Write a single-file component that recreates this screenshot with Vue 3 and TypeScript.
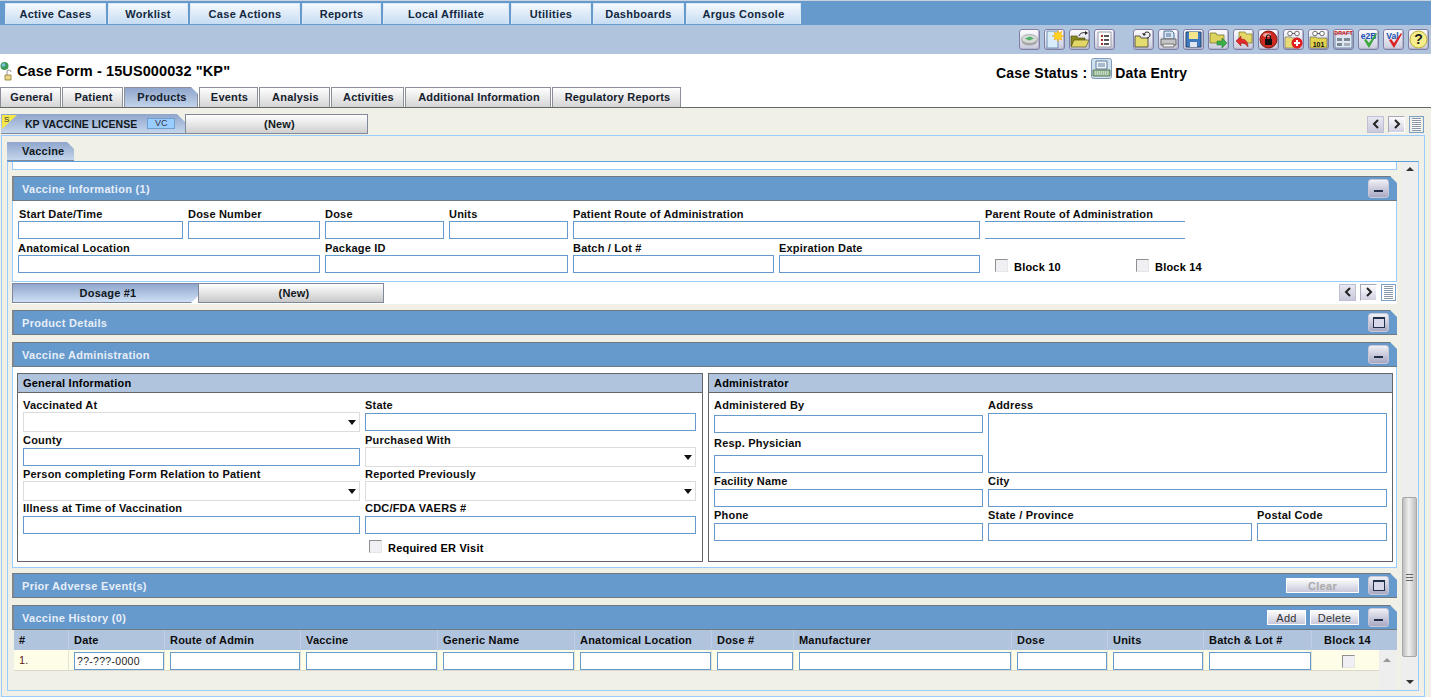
<script setup lang="ts">
interface Field { label: string; width: number; open?: boolean }

const menus = [
  { label: 'Active Cases', width: 101 },
  { label: 'Worklist', width: 80 },
  { label: 'Case Actions', width: 110 },
  { label: 'Reports', width: 79 },
  { label: 'Local Affiliate', width: 126 },
  { label: 'Utilities', width: 80 },
  { label: 'Dashboards', width: 91 },
  { label: 'Argus Console', width: 115 },
]
const tabs = [
  { label: 'General', width: 61 },
  { label: 'Patient', width: 61 },
  { label: 'Products', width: 74, active: true },
  { label: 'Events', width: 59 },
  { label: 'Analysis', width: 71 },
  { label: 'Activities', width: 73 },
  { label: 'Additional Information', width: 146 },
  { label: 'Regulatory Reports', width: 129 },
]
const infoRow1: Field[] = [
  { label: 'Start Date/Time', width: 165 },
  { label: 'Dose Number', width: 132 },
  { label: 'Dose', width: 119 },
  { label: 'Units', width: 119 },
  { label: 'Patient Route of Administration', width: 407 },
  { label: 'Parent Route of Administration', width: 200, open: true },
]
const infoRow2: Field[] = [
  { label: 'Anatomical Location', width: 302 },
  { label: 'Package ID', width: 243 },
  { label: 'Batch / Lot #', width: 201 },
  { label: 'Expiration Date', width: 201 },
]
const historyCols = ['#', 'Date', 'Route of Admin', 'Vaccine', 'Generic Name', 'Anatomical Location', 'Dose #', 'Manufacturer', 'Dose', 'Units', 'Batch & Lot #']
</script>

<template>
  <div class="page">
    <nav class="menubar">
      <button v-for="m in menus" :key="m.label" class="menu" :style="{ width: m.width + 'px' }">{{ m.label }}</button>
    </nav>

    <div class="toolbar">
      <div class="tools">
        <span class="tool"><svg viewBox="0 0 19 19"><ellipse cx="9.5" cy="11" rx="8" ry="4.5" fill="#a9a9a9"/><ellipse cx="9.5" cy="9" rx="8" ry="4.5" fill="#d5dad5" stroke="#8a8a8a" stroke-width=".6"/><path d="M5 8.5l5-2 4 2-5 2z" fill="#4fb06a"/></svg></span>
        <span class="tool"><svg viewBox="0 0 19 19"><path d="M2 1h11v17H2z" fill="#d8ecfa" stroke="#6f8fb8"/><path d="M13 0l1 3 3-2-1 4 3 1-3 1 1 3-3-1-1 3-1-3-3 1 1-3-3-1 3-1-1-3 3 1z" fill="#ffd21f" stroke="#e89a10" stroke-width=".4"/></svg></span>
        <span class="tool"><svg viewBox="0 0 19 19"><path d="M1 6h6l1 2h7v8H1z" fill="#8b8a1c" stroke="#3d3d10" stroke-width=".6"/><path d="M4 10h15l-3 7H1z" fill="#e3d768" stroke="#3d3d10" stroke-width=".6"/><path d="M9 6c1-3 4-4 7-3" fill="none" stroke="#222" stroke-width="1"/><path d="M15 1l3 2-3 2z" fill="#222"/></svg></span>
        <span class="tool"><svg viewBox="0 0 19 19"><path d="M3 2h13v15H3z" fill="#fff" stroke="#9a9aa8"/><path d="M6 5h2v2H6zM6 9h2v2H6zM6 13h2v2H6z" fill="#a03020"/><path d="M9 5h5v2H9zM9 9h5v2H9zM9 13h5v2H9z" fill="#555"/></svg></span>
        <span class="tool gap"><svg viewBox="0 0 19 19"><path d="M1 6h5l1 2h7v9H1z" fill="#e4dc70" stroke="#333" stroke-width=".8"/><path d="M10 5c0-4 6-4 6 0 0 2-2 3-3 3" fill="none" stroke="#222" stroke-width="1"/><path d="M8 3l2 3 2-2z" fill="#222"/></svg></span>
        <span class="tool"><svg viewBox="0 0 19 19"><path d="M5 1h8l2 2v6H5z" fill="#d8e6f4" stroke="#4c6f99"/><path d="M2 9h15v6H2z" fill="#c4c4c4" stroke="#666"/><path d="M4 14h11v3H4z" fill="#efefef" stroke="#777"/><path d="M7 4h5M7 6h5" stroke="#4c6f99"/></svg></span>
        <span class="tool"><svg viewBox="0 0 19 19"><path d="M2 2h15v15H2z" fill="#3f79c0" stroke="#23446e"/><path d="M5 2h9v7H5z" fill="#f2e58c"/><path d="M6 12h7v5H6z" fill="#dfe6ee"/></svg></span>
        <span class="tool"><svg viewBox="0 0 19 19"><path d="M1 3h6l1 2h7v8H1z" fill="#dcd25e" stroke="#6a6a20" stroke-width=".7"/><path d="M8 11h5V8l5 5-5 5v-3H8z" fill="#3cae49" stroke="#1f6a2a" stroke-width=".5"/></svg></span>
        <span class="tool"><svg viewBox="0 0 19 19"><path d="M5 2h6l1 2h6v9H5z" fill="#e5d66a" stroke="#7a7a20" stroke-width=".7"/><path d="M2 11l5-5v3c5 0 7 3 7 8-2-3-4-4-7-4v3z" fill="#e32b2b" stroke="#8c1414" stroke-width=".5"/></svg></span>
        <span class="tool"><svg viewBox="0 0 19 19"><circle cx="9.5" cy="9.5" r="8.5" fill="#cf2a22" stroke="#7b1410"/><ellipse cx="8" cy="5" rx="4" ry="2" fill="#f0a09a"/><path d="M6 9h7v6H6z" fill="#111"/><path d="M7.5 9V7a2 2 0 0 1 4 0v2" fill="none" stroke="#111" stroke-width="1.2"/></svg></span>
        <span class="tool"><svg viewBox="0 0 19 19"><path d="M1 7h6l1 1h7v10H1z" fill="#e7dc78" stroke="#666" stroke-width=".6"/><circle cx="6" cy="3.5" r="2.3" fill="#fff" stroke="#333" stroke-width=".7"/><circle cx="13" cy="3.5" r="2.3" fill="#fff" stroke="#333" stroke-width=".7"/><path d="M8 3.5h3" stroke="#333" stroke-width=".7"/><circle cx="13" cy="13" r="5.5" fill="#e11d1d"/><path d="M10 12h2v-2h2v2h2v2h-2v2h-2v-2h-2z" fill="#fff"/></svg></span>
        <span class="tool"><svg viewBox="0 0 19 19"><path d="M1 7h6l1 1h10v10H1z" fill="#e1d34e" stroke="#555" stroke-width=".6"/><circle cx="6" cy="3.5" r="2.3" fill="#fff" stroke="#333" stroke-width=".7"/><circle cx="13" cy="3.5" r="2.3" fill="#fff" stroke="#333" stroke-width=".7"/><path d="M8 3.5h3" stroke="#333" stroke-width=".7"/><text x="9.5" y="16.5" class="ico-text ico-101">101</text></svg></span>
        <span class="tool"><svg viewBox="0 0 19 19"><path d="M1 3h17v15H1z" fill="#dfe8f2" stroke="#6d88a8"/><path d="M3 8h5v3H3zM3 13h5v3H3z" fill="#7d8a96"/><path d="M10 8h6v3h-6z" fill="#7d8a96"/><path d="M10 13h6v3h-6z" fill="#a7b1bb"/><text x="9.5" y="4.5" class="ico-text ico-draft">DRAFT</text></svg></span>
        <span class="tool"><svg viewBox="0 0 19 19"><text x="9.5" y="8.5" class="ico-text ico-e2b">e2B</text><path d="M5 10l2-1 3 4 7-10 1 1-8 14z" fill="#3ca63c"/></svg></span>
        <span class="tool"><svg viewBox="0 0 19 19"><text x="8.5" y="9" class="ico-text ico-val">Val</text><path d="M5 10l2-1 3 4 7-10 1 1-8 14z" fill="#dd2020"/></svg></span>
        <span class="tool"><svg viewBox="0 0 19 19"><circle cx="9.5" cy="9.5" r="8.5" fill="#f6ee8a" stroke="#b8ac3a"/><text x="9.5" y="14" class="ico-text ico-q">?</text></svg></span>
      </div>
    </div>

    <header class="titlebar">
      <div class="title">
        <svg class="title-ico" viewBox="0 0 16 20"><circle cx="4.5" cy="5" r="4" fill="#3f9a58"/><circle cx="3.5" cy="4" r="1.8" fill="#7cc2e8"/><path d="M5 14h6v5H5z" fill="#e8d98a" stroke="#8a7a30" stroke-width=".8"/><path d="M7 14v-3a2 2 0 0 1 4 0" fill="none" stroke="#777" stroke-width=".8"/></svg>
        <h1>Case Form - 15US000032 "KP"</h1>
      </div>
      <div class="status">
        <span>Case Status :</span>
        <svg class="status-ico" viewBox="0 0 21 21"><rect x=".5" y=".5" width="20" height="20" rx="2" fill="#cfe0ef" stroke="#8099b4"/><path d="M5 3h11v8H5z" fill="#eef4fa" stroke="#5d7d9e"/><path d="M7 6h7M7 8h7" stroke="#5d7d9e"/><path d="M2 12h17v6H2z" fill="#9fc09f" stroke="#5a7a5a"/><path d="M4 14h13M4 16h13" stroke="#e6efe6" stroke-dasharray="1 1"/></svg>
        <span>Data Entry</span>
      </div>
    </header>

    <div class="tabs">
      <div v-for="t in tabs" :key="t.label" class="tab" :class="{ active: t.active }" :style="{ width: t.width + 'px' }">{{ t.label }}</div>
    </div>

    <main class="body">
      <div class="subtabs">
        <div class="product-tab">
          <span class="suspect">S</span>
          <span>KP VACCINE LICENSE</span>
          <span class="vc">VC</span>
        </div>
        <div class="new-tab product-new">(New)</div>
        <div class="nav nav-top">
          <span class="nav-btn prev"><svg viewBox="0 0 10 10"><path d="M7 1L3 5l4 4" /></svg></span>
          <span class="nav-btn next"><svg viewBox="0 0 10 10"><path d="M3 1l4 4-4 4" /></svg></span>
          <span class="nav-list"></span>
        </div>
      </div>

      <div class="frame-outer">
        <div class="vaccine-tab">Vaccine</div>
        <div class="frame-inner">
          <div class="content">
            <div class="stub"></div>

            <section class="sect-head first">
              <span>Vaccine Information (1)</span>
              <span class="collapse"><i class="dash"></i></span>
            </section>
            <div class="info-body">
              <div class="row row-one">
                <label v-for="f in infoRow1" :key="f.label" class="field" :style="{ width: f.width + 'px' }">
                  <span class="lbl">{{ f.label }}</span>
                  <input class="inp" :class="{ open: f.open }" type="text" />
                </label>
              </div>
              <div class="row row-two">
                <label v-for="f in infoRow2" :key="f.label" class="field" :style="{ width: f.width + 'px' }">
                  <span class="lbl">{{ f.label }}</span>
                  <input class="inp" type="text" />
                </label>
                <span class="check check-10"><i class="box"></i>Block 10</span>
                <span class="check check-14"><i class="box"></i>Block 14</span>
              </div>
            </div>
            <div class="dosage">
              <div class="dose-tab">Dosage #1</div>
              <div class="new-tab dose-new">(New)</div>
              <div class="nav nav-dose">
                <span class="nav-btn prev"><svg viewBox="0 0 10 10"><path d="M7 1L3 5l4 4" /></svg></span>
                <span class="nav-btn next"><svg viewBox="0 0 10 10"><path d="M3 1l4 4-4 4" /></svg></span>
                <span class="nav-list"></span>
              </div>
            </div>

            <section class="sect-head gap-6">
              <span>Product Details</span>
              <span class="collapse"><i class="square"></i></span>
            </section>

            <section class="sect-head gap-7">
              <span>Vaccine Administration</span>
              <span class="collapse"><i class="dash"></i></span>
            </section>
            <div class="admin-body">
              <div class="panel">
                <div class="panel-head">General Information</div>
                <div class="general">
                  <div class="g-cell"><span class="lbl">Vaccinated At</span><div class="sel"></div></div>
                  <div class="g-cell"><span class="lbl">State</span><input class="inp" type="text" /></div>
                  <div class="g-cell"><span class="lbl">County</span><input class="inp" type="text" /></div>
                  <div class="g-cell"><span class="lbl">Purchased With</span><div class="sel"></div></div>
                  <div class="g-cell"><span class="lbl">Person completing Form Relation to Patient</span><div class="sel"></div></div>
                  <div class="g-cell"><span class="lbl">Reported Previously</span><div class="sel"></div></div>
                  <div class="g-cell"><span class="lbl">Illness at Time of Vaccination</span><input class="inp" type="text" /></div>
                  <div class="g-cell"><span class="lbl">CDC/FDA VAERS #</span><input class="inp" type="text" /></div>
                  <div></div>
                  <div class="er"><i class="box"></i>Required ER Visit</div>
                </div>
              </div>
              <div class="panel">
                <div class="panel-head">Administrator</div>
                <div class="admin">
                  <div class="a-left">
                    <div class="a-cell a-by"><span class="lbl">Administered By</span><input class="inp" type="text" /></div>
                    <div class="a-cell a-resp"><span class="lbl">Resp. Physician</span><input class="inp" type="text" /></div>
                  </div>
                  <div class="a-cell a-addr"><span class="lbl">Address</span><div class="textarea"></div></div>
                  <div class="a-cell"><span class="lbl">Facility Name</span><input class="inp" type="text" /></div>
                  <div class="a-cell a-wide"><span class="lbl">City</span><input class="inp" type="text" /></div>
                  <div class="a-cell"><span class="lbl">Phone</span><input class="inp" type="text" /></div>
                  <div class="a-cell"><span class="lbl">State / Province</span><input class="inp" type="text" /></div>
                  <div class="a-cell"><span class="lbl">Postal Code</span><input class="inp" type="text" /></div>
                </div>
              </div>
            </div>

            <section class="sect-head gap-5">
              <span>Prior Adverse Event(s)</span>
              <span class="actions">
                <button class="act clear">Clear</button>
                <span class="collapse"><i class="square"></i></span>
              </span>
            </section>

            <section class="sect-head gap-7b">
              <span>Vaccine History (0)</span>
              <span class="actions">
                <button class="act add">Add</button>
                <button class="act del">Delete</button>
                <span class="collapse"><i class="dash"></i></span>
              </span>
            </section>
            <div class="history">
              <div class="h-grid h-head">
                <div v-for="c in historyCols" :key="c" class="h-cell">{{ c }}</div>
                <div class="h-cell h-center">Block 14</div>
              </div>
              <div class="h-rowwrap">
                <div class="h-grid h-row">
                  <div class="r-cell r-num">1.</div>
                  <div class="r-cell r-date"><input class="inp" type="text" value="??-???-0000" /></div>
                  <div v-for="n in 9" :key="n" class="r-cell"><input class="inp" type="text" /></div>
                  <div class="r-cell r-check"><i class="box"></i></div>
                </div>
                <div class="mini-scroll"><i class="up"></i></div>
              </div>
            </div>
          </div>
          <div class="scrollbar">
            <i class="up"></i>
            <div class="thumb"><i></i></div>
            <i class="down"></i>
          </div>
        </div>
      </div>
    </main>
  </div>
</template>

<style>
html, body { margin: 0; padding: 0; overflow: hidden; background: #fff; }
</style>

<style scoped>
* { box-sizing: border-box; }
.page {
  width: 1431px; height: 697px; overflow: hidden; display: flex; flex-direction: column;
  font: bold 11px "Liberation Sans", Arial, sans-serif; letter-spacing: .2px; color: #000;
}
button { font: inherit; letter-spacing: inherit; padding: 0; cursor: default; }

.menubar { height: 25px; flex: none; background: #6699cc; border-top: 1px solid #c8d4e0; display: flex; gap: 2px; padding: 2px 0 0 5px; }
.menu { height: 21px; border: 1px solid #dbe8f5; border-width: 1px 1px 0 1px; background: linear-gradient(#f4f9fe, #c6dcf3); color: #12283e; letter-spacing: .3px; }

.toolbar { height: 29px; flex: none; background: #b0c4de; display: flex; justify-content: flex-end; align-items: center; padding-right: 2px; }
.tools { display: flex; gap: 4px; }
.tool { width: 21px; height: 21px; border: 1px solid #7f7fa5; border-radius: 3px; background: linear-gradient(#fbfbff, #c9cbdc); box-shadow: inset -1px -1px 0 #b4b4cc; display: flex; align-items: center; justify-content: center; }
.tool.gap { margin-left: 14px; }
.tool svg { width: 19px; height: 19px; display: block; }
.ico-text { text-anchor: middle; font-family: "Liberation Sans", Arial, sans-serif; font-weight: bold; letter-spacing: 0; }
.ico-101 { font-size: 7px; fill: #111; }
.ico-draft { font-size: 5.5px; fill: #d81414; }
.ico-e2b { font-size: 8.5px; fill: #2050b0; }
.ico-val { font-size: 8.5px; fill: #2050b0; }
.ico-q { font-size: 14px; fill: #222; }

.titlebar { height: 33px; flex: none; background: #fff; display: flex; }
.title { display: flex; align-items: flex-start; width: 231px; flex: none; }
.title-ico { width: 16px; height: 20px; margin-top: 7px; flex: none; }
.title h1 { margin: 8px 0 0 1px; font-size: 14.5px; line-height: 18px; font-weight: bold; letter-spacing: .1px; white-space: nowrap; }
.status { margin-left: 765px; display: flex; align-items: flex-start; font-size: 14px; letter-spacing: .2px; padding-top: 11px; line-height: 17px; white-space: nowrap; }
.status-ico { width: 21px; height: 21px; margin: -7px 3px 0 4px; flex: none; }

.tabs { height: 21px; flex: none; display: flex; gap: 1px; background: #fff; border-bottom: 1px solid #666; }
.tab { height: 20px; border: 1px solid #8a8f98; border-bottom: 0; padding: 0 0 1px 2px; background: linear-gradient(#fefefe, #d5d5d5); display: flex; align-items: center; justify-content: center; color: #14202c; }
.tab.active { background: linear-gradient(#8fa5cc, #c2d4ea); clip-path: polygon(0 0, calc(100% - 7px) 0, 100% 7px, 100% 100%, 0 100%); }

.body { flex: 1; min-height: 0; background: #f0f0e6; display: flex; flex-direction: column; }
.subtabs { height: 21px; margin-top: 6px; flex: none; display: flex; padding-left: 1px; }
.product-tab { width: 184px; height: 20px; background: linear-gradient(#8fa5cc, #c4d6ec); border-bottom: 1px solid #80889a; display: flex; align-items: center; padding-left: 24px; position: relative; font-size: 10.5px; letter-spacing: 0; clip-path: polygon(0 0, calc(100% - 8px) 0, 100% 8px, 100% 100%, 0 100%); color: #101820; }
.suspect { position: absolute; left: 1px; top: 1px; width: 15px; height: 14px; background: #f6e64a; clip-path: polygon(0 0, 100% 0, 0 100%); font-size: 8px; font-weight: normal; line-height: 9px; padding-left: 2px; color: #333; }
.vc { width: 28px; height: 11px; margin-left: 10px; background: #99ccff; border: 1px solid #6f9fd0; font-size: 9px; font-weight: normal; line-height: 9px; text-align: center; color: #334; }
.new-tab { border: 1px solid #80889a; padding-left: 6px; background: linear-gradient(#fefefe, #cfcfcf); display: flex; align-items: center; justify-content: center; color: #101820; }
.product-new { width: 183px; height: 20px; }
.nav { display: flex; align-items: center; margin-left: auto; }
.nav-top { margin-right: 7px; height: 18px; margin-top: 1px; }
.nav-btn { width: 17px; height: 17px; border: 1px solid #fff; display: flex; align-items: center; justify-content: center; background: linear-gradient(#e8e8f2, #c8c8dc); }
.nav-btn.prev { border-color: #c0c0d4; }
.nav-btn.next { margin-left: 4px; border-color: #a8a8b8 #fff #fff #a8a8b8; background: linear-gradient(#fdfdfd, #d0d0e2); }
.nav-btn svg { width: 10px; height: 10px; fill: none; stroke: #222; stroke-width: 2; }
.nav-list { width: 15px; height: 17px; margin-left: 4px; border: 1px solid #7aa0c8; background: repeating-linear-gradient(#fff 0 1px, #8a96a8 1px 2px); background-clip: content-box; padding: 1px 2px; }

.frame-outer { height: 562px; width: 1424px; margin-left: 1px; border: 1px solid #99ccff; padding: 6px 0 0 5px; display: flex; flex-direction: column; flex: none; }
.vaccine-tab { width: 67px; height: 19px; flex: none; background: linear-gradient(#8fa5cc, #c4d6ec); border-bottom: 1px solid #80889a; padding-left: 15px; line-height: 18px; color: #101820; clip-path: polygon(0 0, calc(100% - 7px) 0, 100% 7px, 100% 100%, 0 100%); }
.frame-inner { width: 1412px; height: 530px; flex: none; border: 1px solid #99ccff; border-top-color: #5f9fdc; padding-left: 4px; display: flex; }
.content { width: 1385px; flex: none; display: flex; flex-direction: column; }
.stub { height: 8px; flex: none; background: #fff; border-bottom: 1px solid #99ccff; border-right: 1px solid #99ccff; border-left: 1px solid #99ccff; }

.sect-head { height: 25px; flex: none; background: #6699cc; border-top: 1px solid #707880; border-bottom: 1px solid #707880; border-left: 2px solid #80868c; padding-left: 8px; padding-right: 8px; color: #e6eef8; letter-spacing: .3px; display: flex; align-items: center; justify-content: space-between; clip-path: polygon(0 0, calc(100% - 7px) 0, 100% 7px, 100% 100%, 0 100%); }
.sect-head.first { margin-top: 6px; }
.gap-6 { margin-top: 6px; }
.gap-7 { margin-top: 7px; }
.gap-5 { margin-top: 5px; }
.gap-7b { margin-top: 7px; }
.collapse { width: 21px; height: 19px; border: 1px solid #c8c8d8; border-radius: 3px; background: linear-gradient(#f0f0f6, #a8a8c4); display: flex; align-items: center; justify-content: center; flex: none; }
.dash { width: 9px; height: 2px; margin-top: 4px; background: #22304a; display: block; }
.square { width: 12px; height: 11px; border: 1px solid #22304a; border-top-width: 2px; background: #d8d8ea; display: block; }
.actions { display: flex; align-items: center; }
.act { height: 15px; border: 1px solid #fff; background: linear-gradient(#fdfdfd, #c8c8dc); font-weight: normal; color: #333; font-size: 11px; line-height: 12px; }
.clear { width: 73px; margin-right: 9px; color: #aaa; font-weight: bold; }
.add { width: 39px; margin-right: 4px; }
.del { width: 49px; margin-right: 9px; }

.info-body { height: 81px; flex: none; background: #fff; border: 1px solid #99ccff; border-top: 0; padding-left: 5px; }
.row { display: flex; gap: 5px; height: 34px; }
.row-one { padding-top: 6px; height: 40px; }
.row-one .field:first-child .lbl { padding-left: 1px; }
.field { display: flex; flex-direction: column; }
.lbl { height: 14px; line-height: 14px; white-space: nowrap; display: block; color: #0c0c0c; }
.inp { display: block; width: 100%; height: 18px; border: 1px solid #6699cc; background: #fff; outline: 0; padding: 0 2px; margin: 0; font: 11px "Liberation Sans", Arial, sans-serif; letter-spacing: .3px; color: #222; border-radius: 0; }
.inp.open { border-left: 0; border-right: 0; }
.check { display: flex; align-items: center; margin-top: 19px; height: 14px; }
.check-10 { margin-left: 10px; width: 141px; }
.check-14 { margin-left: -5px; }
.box { display: block; flex: none; width: 13px; height: 13px; background: #f0f0f4; border: 1px solid; border-color: #8f8f8f #e6e6e6 #e6e6e6 #8f8f8f; }
.check .box { margin-right: 6px; margin-top: -4px; }

.dosage { height: 22px; flex: none; background: #fff; display: flex; padding-top: 1px; }
.dose-tab { width: 186px; height: 20px; padding-left: 5px; background: linear-gradient(#8fa5cc, #cfe0f5); border: 1px solid #80889a; border-right: 0; display: flex; align-items: center; justify-content: center; clip-path: polygon(0 0, 100% 0, 100% calc(100% - 7px), calc(100% - 7px) 100%, 0 100%); color: #101820; }
.dose-new { width: 186px; height: 20px; background: linear-gradient(#fff, #c8c8c8); }
.nav-dose { margin-right: 1px; height: 18px; }

.admin-body { height: 201px; flex: none; background: #fff; border: 1px solid #99ccff; border-top: 0; padding: 6px 3px 0 4px; display: flex; gap: 5px; align-items: flex-start; }
.admin-body .panel:first-child { width: 686px; }
.admin-body .panel:last-child { width: 685px; }
.panel { height: 189px; border: 1px solid #666; background: #fff; display: flex; flex-direction: column; }
.panel-head { height: 19px; flex: none; background: #b0c4de; border-bottom: 1px solid #666; padding-left: 5px; line-height: 18px; }

.general { display: grid; grid-template-columns: 337px 331px; column-gap: 5px; grid-template-rows: 35px 34px 34px 34px 22px; padding: 6px 0 0 5px; }
.general .lbl, .admin .lbl { line-height: 12px; }
.g-cell { display: flex; flex-direction: column; }
.sel { height: 20px; margin-top: -1px; border: 1px solid #dcdcdc; background: #fff; position: relative; }
.sel::after { content: ""; position: absolute; right: 3px; top: 7px; border: 4px solid transparent; border-top: 5px solid #111; border-bottom: 0; }
.er { display: flex; align-items: center; padding-left: 4px; height: 14px; margin-top: 5px; }
.er .box { margin-right: 6px; margin-top: -3px; }

.admin { display: grid; grid-template-columns: 269px 264px 130px; column-gap: 5px; padding: 6px 0 0 5px; grid-template-rows: 76px 34px 34px; }
.a-left { display: flex; flex-direction: column; }
.a-cell { display: flex; flex-direction: column; }
.a-by { height: 38px; }
.a-by .lbl { height: 16px; }
.a-resp .lbl { height: 18px; }
.a-addr { grid-column: 2 / 4; }
.textarea { height: 60px; border: 1px solid #6699cc; background: #fff; }
.a-wide { grid-column: 2 / 4; }

.history { flex: 1; display: flex; flex-direction: column; min-height: 0; }
.h-grid { display: grid; grid-template-columns: 55px 96px 136px 137px 137px 137px 82px 218px 96px 96px 108px 67px; }
.h-head { height: 20px; flex: none; background: #b0c4de; margin-left: 2px; padding-right: 17px; }
.h-cell { padding-left: 5px; line-height: 21px; border-right: 1px solid #c0d0e4; white-space: nowrap; color: #0c0c0c; }
.h-center { text-align: center; border-right: 0; padding-left: 4px; }
.h-rowwrap { flex: 1; display: flex; margin-left: 2px; min-height: 0; }
.h-row { height: 21px; flex: none; width: 1365px; background: #fefee8; border-bottom: 1px solid #d8d8cc; }
.r-cell { padding: 2px 0 0 5px; border-right: 1px solid #e4e4d4; }
.r-num { font-weight: normal; line-height: 17px; padding-left: 5px; color: #5a2020; }
.r-date .inp { width: 90px; font-size: 10.5px; }
.r-check { display: flex; justify-content: center; padding: 5px 0 0 5px; border-right: 0; }
.mini-scroll { width: 17px; background: #eeeeee; position: relative; }
.mini-scroll .up { position: absolute; left: 4px; top: 8px; border: 4px solid transparent; border-top: 0; border-bottom: 4px solid #999; }

.scrollbar { width: 16px; margin-left: 5px; flex: none; background: #eeeeee; position: relative; }
.scrollbar .up { position: absolute; left: 4px; top: 5px; border: 4px solid transparent; border-top: 0; border-bottom: 4px solid #333; }
.scrollbar .down { position: absolute; left: 4px; bottom: 6px; border: 4px solid transparent; border-bottom: 0; border-top: 4px solid #333; }
.thumb { position: absolute; left: 0; top: 335px; width: 15px; height: 160px; border: 1px solid #a8a8a8; border-radius: 2px; background: linear-gradient(90deg, #bdbdbd, #f0f0f0 45%, #bdbdbd); display: flex; align-items: center; justify-content: center; }
.thumb i { width: 7px; height: 7px; background: repeating-linear-gradient(#666 0 1px, transparent 1px 3px); display: block; }
</style>
